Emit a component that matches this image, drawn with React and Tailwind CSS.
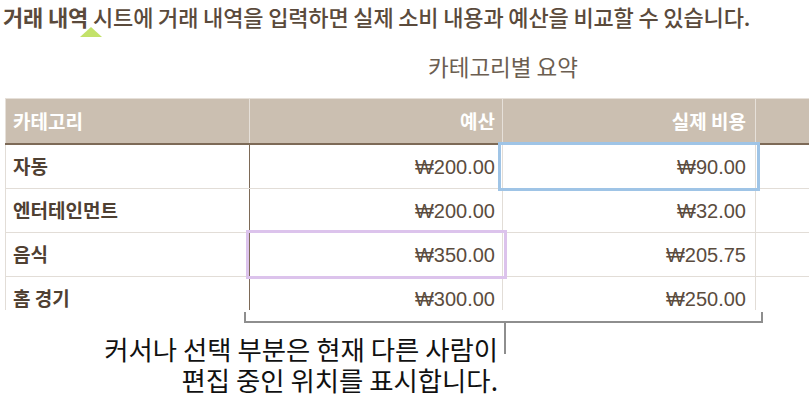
import React from "react";

const KR = { fontFamily: '"Noto Sans CJK KR", "Noto Sans", sans-serif' };
const NUM = { fontFamily: '"Liberation Sans", "DejaVu Sans", sans-serif' };

const rows = [
  { name: "자동", budget: "₩200.00", actual: "₩90.00" },
  { name: "엔터테인먼트", budget: "₩200.00", actual: "₩32.00" },
  { name: "음식", budget: "₩350.00", actual: "₩205.75" },
  { name: "홈 경기", budget: "₩300.00", actual: "₩250.00" },
];

export default function App() {
  return (
    <div
      className="relative w-[809px] h-[404px] overflow-hidden bg-white"
      style={KR}
    >
      {/* Title */}
      <div className="h-[36px] pl-[3px] text-[22px] leading-[32px] text-[#5a4a3b] font-medium tracking-[-0.15px] whitespace-nowrap">
        <span className="font-bold">거래 내역</span> 시트에 거래 내역을 입력하면 실제 소비 내용과 예산을 비교할 수 있습니다.
      </div>
      {/* pointer triangle */}
      <div className="absolute left-[80px] top-[27px] w-0 h-0 border-l-[11px] border-r-[11px] border-b-[10px] border-l-transparent border-r-transparent border-b-[#c3e26a]" />

      {/* Table title */}
      <div className="h-[62px] pt-[16px] pl-[249px] w-[757px] text-center text-[22.5px] leading-[28px] text-[#6b5e51] whitespace-nowrap">
        카테고리별 요약
      </div>

      {/* Table */}
      <div className="ml-[5px] h-[212px] overflow-hidden">
        {/* header */}
        <div className="flex h-[45px] bg-[#cbbfb1] border-t border-[#e6e0d9] text-white font-bold text-[19px]">
          <div className="w-[245px] border-l border-r border-[#e6e0d9] flex items-center pl-[7px]">
            카테고리
          </div>
          <div className="w-[253px] border-r border-[#e6e0d9] flex items-center justify-end pr-[7px]">
            예산
          </div>
          <div className="w-[253px] border-r border-[#e6e0d9] flex items-center justify-end pr-[9px]">
            실제 비용
          </div>
          <div className="flex-1" />
        </div>
        <div className="h-[2px] bg-[#7d6a57]" />
        {rows.map((r) => (
          <div key={r.name} className="flex h-[44px] border-b border-[#e2ddd7]">
            <div className="w-[245px] border-l border-[#e2ddd7] border-r border-r-[#7d6a57] flex items-center pl-[7px] text-[19px] font-bold text-[#4f4032]">
              {r.name}
            </div>
            <div
              className="w-[253px] border-r border-[#e2ddd7] flex items-center justify-end pr-[7px] text-[20px] text-[#5b4c3e]"
              style={NUM}
            >
              {r.budget}
            </div>
            <div
              className="w-[253px] border-r border-[#e2ddd7] flex items-center justify-end pr-[9px] text-[20px] text-[#5b4c3e]"
              style={NUM}
            >
              {r.actual}
            </div>
            <div className="flex-1" />
          </div>
        ))}
      </div>

      {/* collaborator highlights */}
      <div className="absolute left-[498px] top-[142px] w-[262px] h-[49px] border-[3px] border-[#9fc4e6]" />
      <div className="absolute left-[246px] top-[230px] w-[261px] h-[49px] border-[3px] border-[#dcc3ec]" />

      {/* bracket */}
      <div className="mt-[2px] ml-[244px] w-[519px] h-[11px] border-l-2 border-r-2 border-b-2 border-[#8e8e8e]" />
      <div className="flex">
        <div className="w-[498px] pt-[10px] text-right text-[26.4px] text-[#111] whitespace-nowrap">
          <div className="h-[31px] leading-[31px]">커서나 선택 부분은 현재 다른 사람이</div>
          <div className="h-[31px] leading-[31px]">편집 중인 위치를 표시합니다.</div>
        </div>
        <div className="ml-[6px] w-[2px] h-[31px] bg-[#8e8e8e]" />
      </div>
    </div>
  );
}
